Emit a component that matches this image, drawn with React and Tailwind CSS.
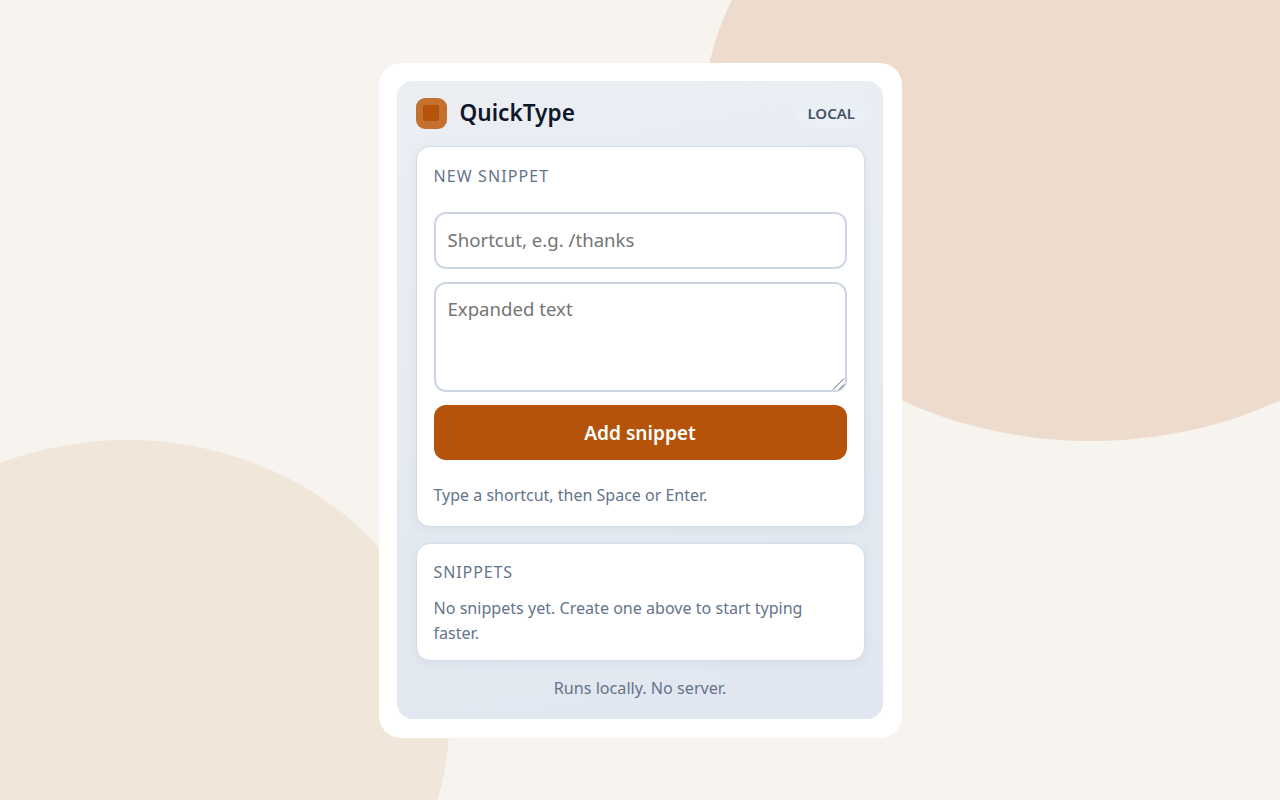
export default function App() {
  return (
    <div className="relative flex h-[800px] w-[1280px] items-center justify-center overflow-hidden bg-[#f7f4ef] font-['Noto_Sans',sans-serif]">
      <div className="absolute left-[703px] top-[-199px] h-[640px] w-[776px] rounded-[50%] bg-[#eddccd]" />
      <div className="absolute left-[-195px] top-[440px] h-[568px] w-[644px] rounded-[50%] bg-[#f1e6da]" />
      <div className="relative h-[675px] w-[523px] rounded-[22px] bg-white pb-[19px] pl-[18px] pr-[19px] pt-[18px]">
        <div className="flex h-full flex-col rounded-[16px] bg-[linear-gradient(170deg,#ebeff4,#e1e7f0)] pl-[19px] pr-[18px] pt-[16px]">
          <header className="flex h-[33px] items-center justify-between">
            <div className="flex items-center gap-[13px]">
              <div className="flex h-[31px] w-[31px] items-center justify-center rounded-[9px] bg-[#c4702f]">
                <div className="h-[16px] w-[16px] rounded-[2px] bg-[#b45309]" />
              </div>
              <span className="text-[22.6px] font-semibold leading-none text-[#0f172a]">QuickType</span>
            </div>
            <span className="-mr-px rounded-full bg-[#ebf0f6] px-[10.5px] py-[5px] text-[15px] font-semibold leading-[20px] text-[#475569]">LOCAL</span>
          </header>
          <section className="mt-[16px] flex h-[381px] flex-col rounded-[14px] border border-[#d3dcea] bg-white px-[17px] pt-[17px] shadow-[0_2px_8px_rgba(100,116,139,0.1)]">
            <h2 className="text-[16px] font-normal leading-[24px] tracking-[1.1px] text-[#64748b]">NEW SNIPPET</h2>
            <input
              readOnly
              placeholder="Shortcut, e.g. /thanks"
              className="mt-[24px] h-[57px] w-full shrink-0 rounded-[12px] border-2 border-[#cdd6e4] bg-white px-[12px] pb-[2px] text-[18.6px] text-[#334155] outline-none placeholder:text-[#757575]"
            />
            <div className="relative mt-[13px] h-[110px] shrink-0">
              <textarea
                readOnly
                placeholder="Expanded text"
                className="block h-full w-full resize-none rounded-[12px] border-2 border-[#cdd6e4] bg-white px-[12px] py-[12px] text-[18.6px] leading-[26px] text-[#334155] outline-none placeholder:text-[#757575]"
              />
              <svg className="absolute bottom-[2px] right-[2px] h-[13px] w-[13px]" viewBox="0 0 13 13" fill="none" stroke="#5a5a5a" strokeWidth="1">
                <path d="M1 12.5 12 1.5" />
                <path d="M7 12.5 12 7.5" />
              </svg>
            </div>
            <button className="mt-[13px] h-[55px] w-full shrink-0 rounded-[12px] bg-[#b45309] pt-[2px] text-[19.1px] font-semibold text-white">Add snippet</button>
            <p className="mt-[23px] text-[16px] leading-[24px] text-[#64748b]">Type a shortcut, then Space or Enter.</p>
          </section>
          <section className="mt-[16px] h-[118px] rounded-[14px] border border-[#d3dcea] bg-white px-[17px] pt-[16px] shadow-[0_2px_8px_rgba(100,116,139,0.1)]">
            <h2 className="text-[16px] font-normal leading-[24px] tracking-[0.9px] text-[#64748b]">SNIPPETS</h2>
            <p className="mt-[12px] text-[16.08px] leading-[25px] text-[#64748b]">No snippets yet. Create one above to start typing faster.</p>
          </section>
          <p className="mt-[15px] text-center text-[16.15px] leading-[24px] text-[#64748b]">Runs locally. No server.</p>
        </div>
      </div>
    </div>
  );
}
